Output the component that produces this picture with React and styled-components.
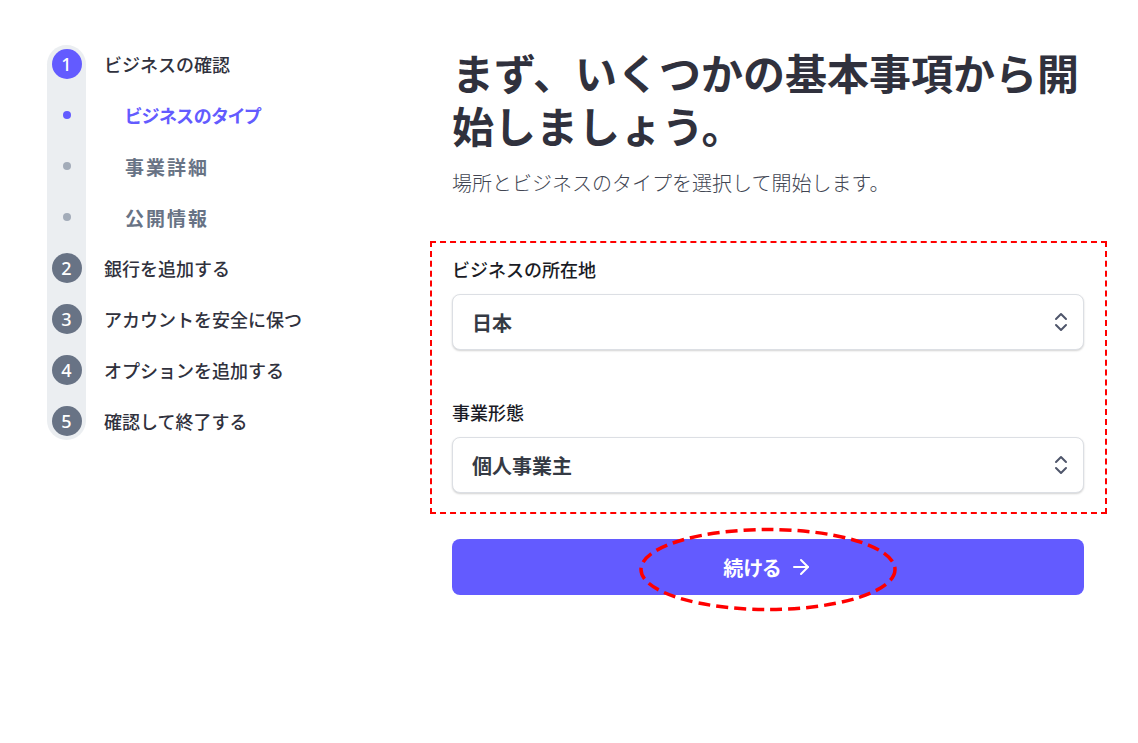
import React from "react";
import styled, { createGlobalStyle } from "styled-components";
import { ChevronsUpDown, ArrowRight } from "lucide-react";

const GlobalStyle = createGlobalStyle`
  html, body {
    margin: 0;
    padding: 0;
    background: #ffffff;
  }
  body {
    font-family: "Noto Sans CJK JP", "Noto Sans", "Liberation Sans", sans-serif;
    color: #30313d;
  }
`;

const Page = styled.div`
  display: flex;
  padding: 45px 0 0 47px;
  min-height: 743px;
  box-sizing: border-box;
`;

const Sidebar = styled.nav`
  width: 405px;
  flex-shrink: 0;
`;

const Steps = styled.ol`
  position: relative;
  display: flex;
  flex-direction: column;
  gap: 21px;
  margin: 0;
  padding: 4px 0;
  list-style: none;

  &::before {
    content: "";
    position: absolute;
    left: 0;
    top: 0;
    bottom: 0;
    width: 39px;
    border-radius: 20px;
    background: #ebeef1;
  }
`;

const Step = styled.li`
  position: relative;
  display: flex;
  align-items: center;
  height: 30px;
`;

const Marker = styled.span`
  width: 39px;
  display: flex;
  justify-content: center;
  flex-shrink: 0;
`;

const Num = styled.span`
  width: 30px;
  height: 30px;
  border-radius: 50%;
  display: flex;
  align-items: center;
  justify-content: center;
  background: ${p => (p.active ? "#635bff" : "#687385")};
  color: #ffffff;
  font-family: "Noto Sans", "Liberation Sans", sans-serif;
  font-size: 18px;
  font-weight: 500;
`;

const Dot = styled.span`
  width: 8px;
  height: 8px;
  border-radius: 50%;
  background: ${p => (p.active ? "#635bff" : "#a3acb9")};
`;

const StepLabel = styled.span`
  margin-left: 18px;
  font-size: 18px;
  font-weight: 500;
  color: #30313d;
`;

const SubLabel = styled.span`
  margin-left: 39px;
  font-size: ${p => (p.active ? "18px" : "19px")};
  font-weight: 700;
  letter-spacing: ${p => (p.active ? "0" : "2px")};
  color: ${p => (p.active ? "#635bff" : "#687385")};
  font-feature-settings: ${p => (p.active ? '"palt"' : "normal")};
`;

const Main = styled.main`
  width: 632px;
  display: flex;
  flex-direction: column;
`;

const Title = styled.h1`
  margin: 0;
  font-size: 42px;
  line-height: 53px;
  font-weight: 700;
  color: #30313d;
`;

const Subtitle = styled.p`
  margin: 17px 0 0;
  font-size: 20px;
  line-height: 30px;
  font-weight: 300;
  color: #414552;
`;

const Fields = styled.section`
  margin: 43px -23px 0 -22px;
  padding: 13px 21px 19px 20px;
  border: 2px dashed #ff0000;
  display: flex;
  flex-direction: column;
  gap: 49px;
`;

const Field = styled.div`
  display: flex;
  flex-direction: column;
  gap: 12px;
`;

const Label = styled.label`
  font-size: 18px;
  line-height: 26px;
  font-weight: 500;
  color: #1a1b25;
`;

const Select = styled.div`
  height: 56px;
  box-sizing: border-box;
  display: flex;
  align-items: center;
  justify-content: space-between;
  padding: 0 10px 0 19px;
  border: 1px solid #dcdfe4;
  border-radius: 8px;
  background: #ffffff;
  box-shadow: 0 1px 2px rgba(0, 0, 0, 0.18);
  font-size: 20px;
  font-weight: 700;
  color: #353a44;
`;

const Chevron = styled(ChevronsUpDown)`
  color: #4f566b;
`;

const Button = styled.button`
  position: relative;
  margin-top: 25px;
  height: 56px;
  border: none;
  border-radius: 8px;
  background: #635bff;
  color: #ffffff;
  font-family: inherit;
  font-size: 20px;
  font-weight: 700;
  display: flex;
  align-items: center;
  justify-content: center;
  gap: 8px;
  font-feature-settings: "palt";
`;

const Circled = styled.svg`
  position: absolute;
  left: 50%;
  top: 50%;
  transform: translate(-50%, -47%);
  overflow: visible;
  pointer-events: none;
`;

const steps = [
  { n: 1, label: "ビジネスの確認", active: true },
  { sub: "ビジネスのタイプ", active: true },
  { sub: "事業詳細" },
  { sub: "公開情報" },
  { n: 2, label: "銀行を追加する" },
  { n: 3, label: "アカウントを安全に保つ" },
  { n: 4, label: "オプションを追加する" },
  { n: 5, label: "確認して終了する" },
];

export default function App() {
  return (
    <>
      <GlobalStyle />
      <Page>
        <Sidebar>
          <Steps>
            {steps.map((s, i) => (
              <Step key={i}>
                <Marker>
                  {s.sub ? <Dot active={s.active} /> : <Num active={s.active}>{s.n}</Num>}
                </Marker>
                {s.sub ? (
                  <SubLabel active={s.active}>{s.sub}</SubLabel>
                ) : (
                  <StepLabel>{s.label}</StepLabel>
                )}
              </Step>
            ))}
          </Steps>
        </Sidebar>
        <Main>
          <Title>まず、いくつかの基本事項から開始しましょう。</Title>
          <Subtitle>場所とビジネスのタイプを選択して開始します。</Subtitle>
          <Fields>
            <Field>
              <Label>ビジネスの所在地</Label>
              <Select>
                日本
                <Chevron size={24} strokeWidth={2} />
              </Select>
            </Field>
            <Field>
              <Label>事業形態</Label>
              <Select>
                個人事業主
                <Chevron size={24} strokeWidth={2} />
              </Select>
            </Field>
          </Fields>
          <Button>
            続ける
            <ArrowRight size={24} strokeWidth={2} />
            <Circled width="257" height="83" viewBox="0 0 257 83">
              <ellipse
                cx="128.5"
                cy="41.5"
                rx="127"
                ry="40"
                fill="none"
                stroke="#ff0000"
                strokeWidth="3.5"
                strokeDasharray="12 6"
              />
            </Circled>
          </Button>
        </Main>
      </Page>
    </>
  );
}
